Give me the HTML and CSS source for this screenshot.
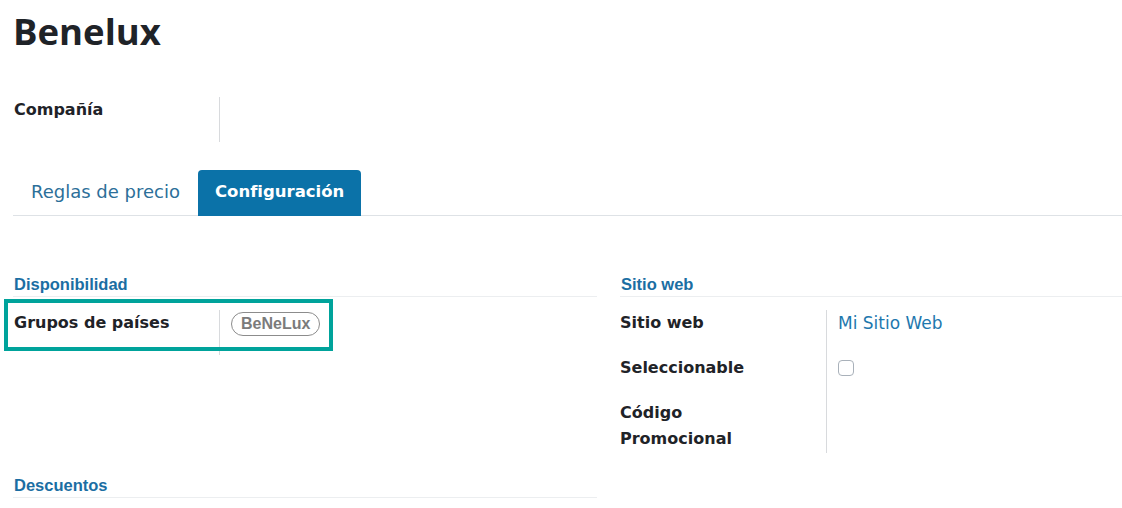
FILE: index.html
```html
<!DOCTYPE html>
<html lang="es">
<head>
<meta charset="utf-8">
<title>Benelux</title>
<link rel="stylesheet" href="styles.css">
</head>
<body>
<div class="sheet">
  <h1 class="title">Benelux</h1>

  <div class="field-row company">
    <div class="label">Compañía</div>
    <div class="value"></div>
  </div>

  <ul class="tabs">
    <li class="tab">Reglas de precio</li>
    <li class="tab active">Configuración</li>
  </ul>

  <div class="groups">
    <div class="group left">
      <div class="group-title">Disponibilidad</div>
      <div class="rows">
        <div class="field-row">
          <div class="label">Grupos de países</div>
          <div class="value"><span class="badge">BeNeLux</span></div>
        </div>
      </div>
      <div class="highlight"></div>
    </div>

    <div class="group right">
      <div class="group-title">Sitio web</div>
      <div class="rows">
        <div class="field-row">
          <div class="label">Sitio web</div>
          <div class="value"><a class="link">Mi Sitio Web</a></div>
        </div>
        <div class="field-row">
          <div class="label">Seleccionable</div>
          <div class="value"><span class="checkbox"></span></div>
        </div>
        <div class="field-row last">
          <div class="label">Código<br>Promocional</div>
          <div class="value"></div>
        </div>
      </div>
    </div>

    <div class="group left">
      <div class="group-title">Descuentos</div>
    </div>
  </div>
</div>
</body>
</html>
```

FILE: styles.css
```css
* { box-sizing: border-box; }
html, body { margin: 0; padding: 0; background: #ffffff; }
body {
  font-family: "DejaVu Sans", "Open Sans", sans-serif;
  color: #212529;
  width: 1122px;
  height: 508px;
  overflow: hidden;
}
.sheet { padding: 0 0 0 13px; }

.title {
  margin: 0;
  padding-top: 8px;
  font-family: "Open Sans", "DejaVu Sans", sans-serif;
  font-size: 36.5px;
  line-height: 46px;
  font-weight: 700;
  color: #1f2328;
}

.field-row { display: flex; }
.field-row .label {
  width: 206px;
  flex: none;
  font-size: 16px;
  line-height: 26px;
  font-weight: 700;
  padding-bottom: 19px;
  padding-left: 1px;
  color: #1f2328;
}
.right .field-row .label { padding-left: 0; }
.field-row .value {
  flex: 1;
  border-left: 1px solid #d8dadd;
  padding-left: 11px;
  padding-bottom: 19px;
  font-size: 17px;
  line-height: 26px;
}
.field-row.last .label, .field-row.last .value { padding-bottom: 1px; }

.company { margin-top: 43px; }

.tabs {
  list-style: none;
  margin: 28px 0 0 0;
  padding: 0;
  display: flex;
  border-bottom: 1px solid #dee2e6;
  height: 46px;
}
.tab {
  padding: 0 18px;
  height: 46px;
  line-height: 44px;
  font-size: 18px;
  color: #2c6f99;
}
.tab.active {
  background: #0b72a8;
  color: #ffffff;
  font-size: 16.5px;
  font-weight: 700;
  border-radius: 4px 4px 0 0;
  padding: 0 17px;
}

.groups {
  display: grid;
  grid-template-columns: 584px 502px;
  column-gap: 23px;
  row-gap: 22px;
  margin-top: 58px;
}
.group { position: relative; }
.group-title {
  font-family: "Liberation Sans", "Roboto", sans-serif;
  font-size: 16.5px;
  font-weight: 700;
  line-height: 20px;
  color: #1b6ea3;
  padding: 0 0 2px 1px;
  border-bottom: 1px solid #eceef0;
  margin-bottom: 13px;
}

.badge {
  display: inline-block;
  height: 24px;
  line-height: 22px;
  padding: 0 9px;
  border: 1px solid #8c8c8c;
  border-radius: 12px;
  font-family: "Liberation Sans", "Roboto", sans-serif;
  font-size: 16px;
  font-weight: 700;
  color: #7b7b7b;
  vertical-align: top;
  margin-top: 2px;
}

.link { color: #1e78ae; text-decoration: none; }

.checkbox {
  display: inline-block;
  width: 16px;
  height: 16px;
  border: 1px solid #a9b1ba;
  border-radius: 4px;
  vertical-align: top;
  margin-top: 5px;
}

.highlight {
  position: absolute;
  left: -9px;
  top: 25px;
  width: 329px;
  height: 52px;
  border: 4px solid #00a39b;
}
```
